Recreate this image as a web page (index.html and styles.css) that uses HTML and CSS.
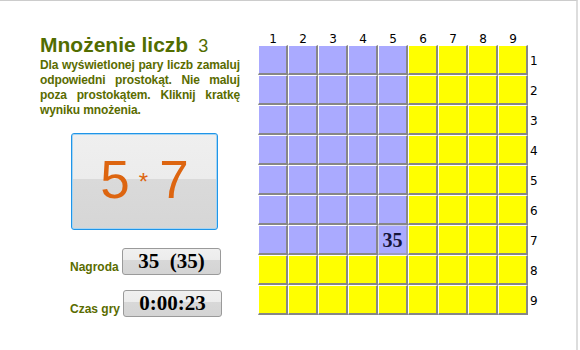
FILE: index.html
```html
<!DOCTYPE html>
<html lang="pl">
<head>
<meta charset="utf-8">
<title>Mnożenie liczb</title>
<link rel="stylesheet" href="styles.css">
</head>
<body>
<div class="page">
  <div class="left">
    <h1 class="title">Mnożenie liczb<span class="level">3</span></h1>
    <p class="desc">Dla wyświetlonej pary liczb zamaluj odpowiedni prostokąt. Nie maluj poza prostokątem. Kliknij kratkę wyniku mnożenia.</p>
    <div class="task"><span class="num">5</span><span class="op">*</span><span class="num">7</span></div>
    <div class="stat"><span class="label">Nagroda</span><div class="val">35  (35)</div></div>
    <div class="stat stat-time"><span class="label">Czas gry</span><div class="val">0:00:23</div></div>
  </div>
  <div class="board">
    <span class="hd">1</span><span class="hd">2</span><span class="hd">3</span><span class="hd">4</span><span class="hd">5</span><span class="hd">6</span><span class="hd">7</span><span class="hd">8</span><span class="hd">9</span><span></span>

    <span class="c b"></span><span class="c b"></span><span class="c b"></span><span class="c b"></span><span class="c b"></span><span class="c y"></span><span class="c y"></span><span class="c y"></span><span class="c y"></span><span class="rl">1</span>
    <span class="c b"></span><span class="c b"></span><span class="c b"></span><span class="c b"></span><span class="c b"></span><span class="c y"></span><span class="c y"></span><span class="c y"></span><span class="c y"></span><span class="rl">2</span>
    <span class="c b"></span><span class="c b"></span><span class="c b"></span><span class="c b"></span><span class="c b"></span><span class="c y"></span><span class="c y"></span><span class="c y"></span><span class="c y"></span><span class="rl">3</span>
    <span class="c b"></span><span class="c b"></span><span class="c b"></span><span class="c b"></span><span class="c b"></span><span class="c y"></span><span class="c y"></span><span class="c y"></span><span class="c y"></span><span class="rl">4</span>
    <span class="c b"></span><span class="c b"></span><span class="c b"></span><span class="c b"></span><span class="c b"></span><span class="c y"></span><span class="c y"></span><span class="c y"></span><span class="c y"></span><span class="rl">5</span>
    <span class="c b"></span><span class="c b"></span><span class="c b"></span><span class="c b"></span><span class="c b"></span><span class="c y"></span><span class="c y"></span><span class="c y"></span><span class="c y"></span><span class="rl">6</span>
    <span class="c b"></span><span class="c b"></span><span class="c b"></span><span class="c b"></span><span class="c b hit">35</span><span class="c y"></span><span class="c y"></span><span class="c y"></span><span class="c y"></span><span class="rl">7</span>
    <span class="c y"></span><span class="c y"></span><span class="c y"></span><span class="c y"></span><span class="c y"></span><span class="c y"></span><span class="c y"></span><span class="c y"></span><span class="c y"></span><span class="rl">8</span>
    <span class="c y"></span><span class="c y"></span><span class="c y"></span><span class="c y"></span><span class="c y"></span><span class="c y"></span><span class="c y"></span><span class="c y"></span><span class="c y"></span><span class="rl">9</span>
  </div>
</div>
</body>
</html>
```

FILE: styles.css
```css
html, body {
  margin: 0;
  padding: 0;
  background: #ffffff;
}

.page {
  box-sizing: border-box;
  width: 578px;
  height: 350px;
  border-top: 1px solid #cccccc;
  border-right: 2px solid #dddddd;
  display: flex;
  align-items: flex-start;
  font-family: "Liberation Sans", Arial, sans-serif;
}

.left {
  box-sizing: border-box;
  width: 240px;
  padding: 32px 0 0 40px;
}

.title {
  margin: 0;
  font-size: 21px;
  line-height: 24px;
  font-weight: bold;
  color: #526d00;
  white-space: nowrap;
}

.level {
  font-weight: normal;
  font-size: 18px;
  margin-left: 10px;
}

.desc {
  margin: 0;
  width: 200px;
  font-size: 12px;
  line-height: 15px;
  font-weight: bold;
  letter-spacing: -0.12px;
  color: #5a6c00;
  text-align: justify;
}

.task {
  box-sizing: border-box;
  width: 147px;
  height: 97px;
  margin: 15px 0 0 31px;
  padding-bottom: 4px;
  border: 1px solid #1f95e8;
  border-radius: 3px;
  box-shadow: inset 0 0 0 1px #a6d4f2;
  background: linear-gradient(#efefef 0, #ececec 47%, #dadada 47%, #d6d6d6 100%);
  display: flex;
  align-items: center;
  justify-content: center;
  color: #dd6510;
}

.num {
  font-size: 53px;
  line-height: 53px;
}

.op {
  font-size: 24px;
  line-height: 53px;
  margin: 0 11px 0 9px;
  position: relative;
  top: 2px;
}

.stat {
  display: flex;
  align-items: flex-end;
  margin: 18px 0 0 30px;
}

.stat-time {
  margin-top: 15px;
}

.label {
  width: 52px;
  font-size: 12px;
  line-height: 15px;
  font-weight: bold;
  color: #5a6c00;
  white-space: nowrap;
}

.stat-time .label {
  width: 53px;
}

.val {
  box-sizing: border-box;
  width: 99px;
  height: 27px;
  border: 1px solid #9a9a9a;
  border-radius: 3px;
  background: linear-gradient(#f0f0f0 0, #ececec 45%, #d8d8d8 45%, #d4d4d4 100%);
  font-family: "Liberation Serif", "Times New Roman", serif;
  font-weight: bold;
  font-size: 21px;
  line-height: 25px;
  text-align: center;
  color: #000000;
  white-space: pre;
}

.board {
  margin: 29px 0 0 18px;
  display: grid;
  grid-template-columns: repeat(9, 30px) 22px;
  grid-template-rows: 15px repeat(9, 30px);
  font-family: "DejaVu Sans", Tahoma, sans-serif;
  font-size: 12px;
  color: #000000;
}

.hd {
  display: flex;
  align-items: flex-end;
  justify-content: center;
  line-height: 12px;
}

.rl {
  display: flex;
  align-items: center;
  padding-left: 2px;
  padding-top: 1px;
}

.c {
  box-sizing: border-box;
  border-top: 1px solid #ffffff;
  border-left: 1px solid #ffffff;
  border-right: 2px solid #878787;
  border-bottom: 2px solid #878787;
}

.b {
  background: #aaaaff;
}

.y {
  background: #ffff00;
}

.hit {
  border-top-color: #d4d4e8;
  border-left-color: #d4d4e8;
  border-right-color: #9c9cc0;
  border-bottom-color: #9c9cc0;
  display: flex;
  align-items: center;
  justify-content: center;
  font-family: "Liberation Serif", "Times New Roman", serif;
  font-weight: bold;
  font-size: 20px;
  color: #14143a;
  padding-top: 1px;
}
```
